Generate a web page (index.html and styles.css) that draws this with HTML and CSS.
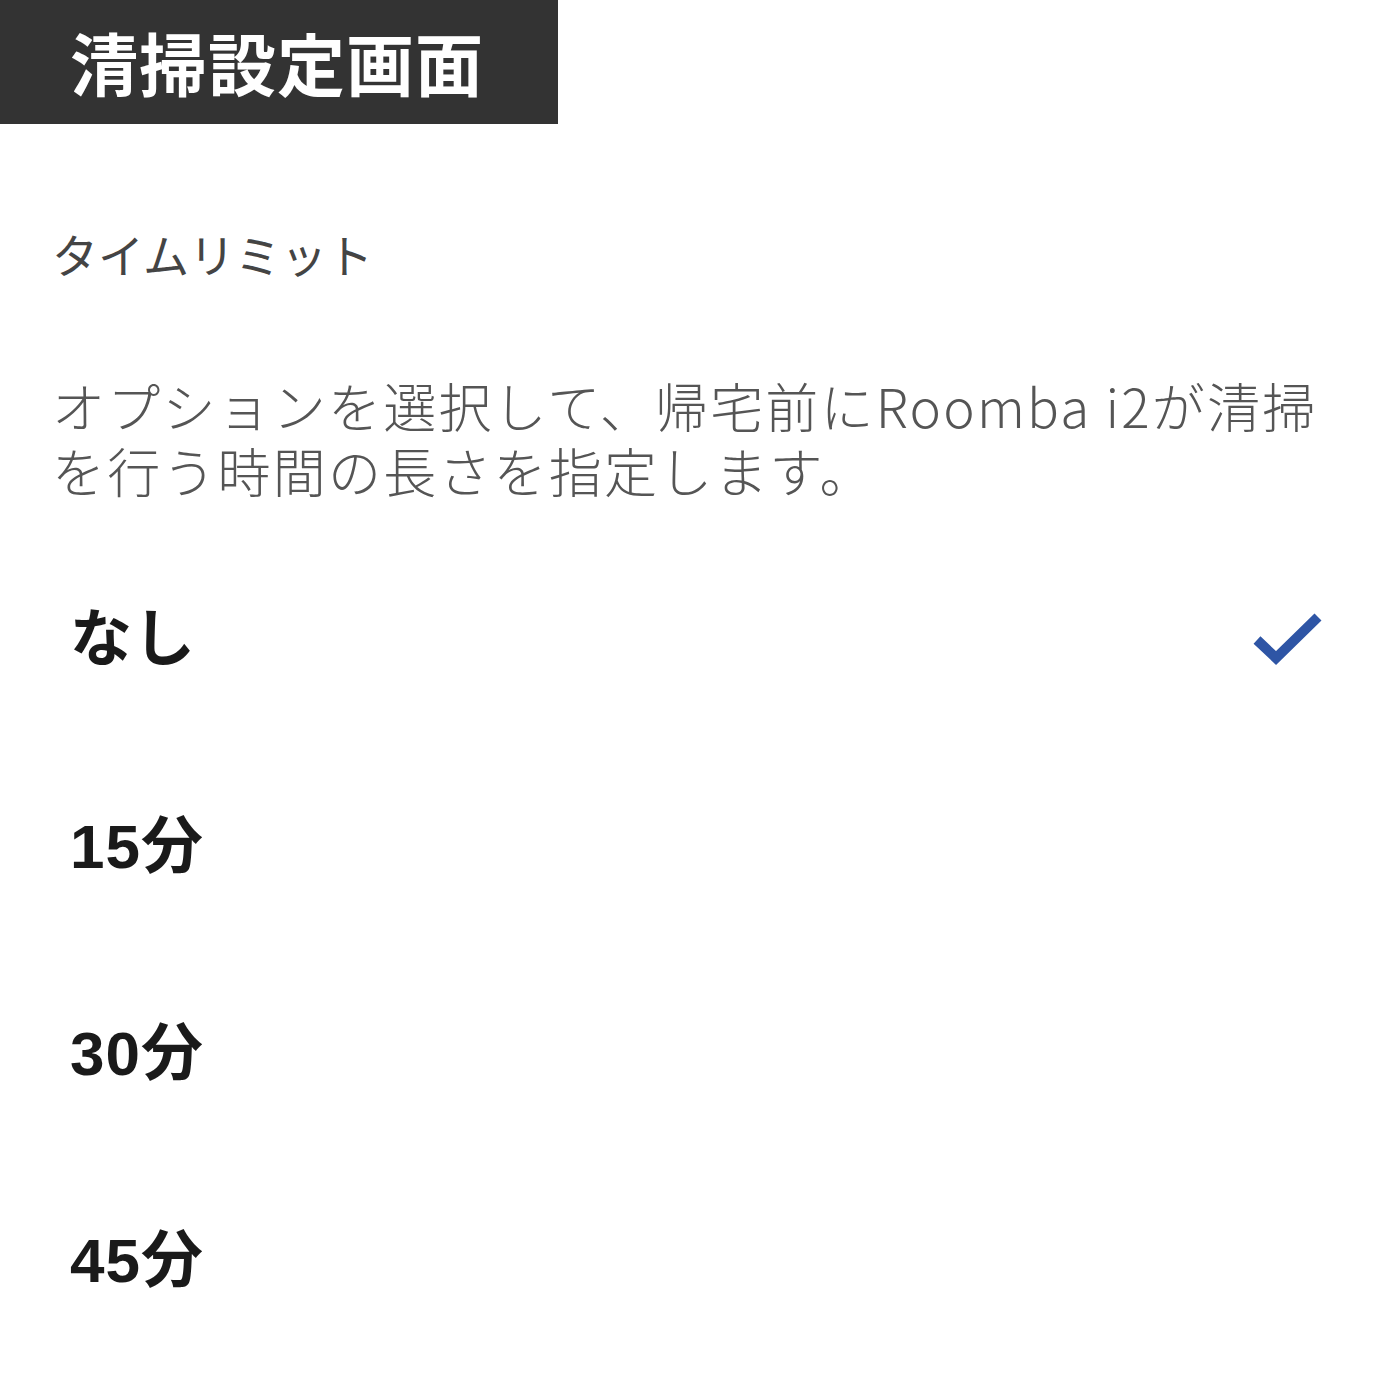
FILE: index.html
```html
<!DOCTYPE html>
<html lang="ja">
<head>
    <meta charset="UTF-8">
    <title>清掃設定画面</title>
    <link rel="stylesheet" href="styles.css">
</head>
<body>
    <div class="header">清掃設定画面</div>

    <div class="content">
        <h2 class="section-title">タイムリミット</h2>
        <p class="description">オプションを選択して、帰宅前にRoomba i2が清掃を行う時間の長さを指定します。</p>

        <!-- 選択肢 -->
        <ul class="options">
            <li class="option selected">
                <span>なし</span>
                <svg class="check" width="70" height="58" viewBox="0 0 70 58">
                    <path d="M5 31 L24 49 L66 8" fill="none" stroke="#2e55a5" stroke-width="10"/>
                </svg>
            </li>
            <li class="option"><span>15分</span></li>
            <li class="option"><span>30分</span></li>
            <li class="option"><span>45分</span></li>
        </ul>
    </div>
</body>
</html>
```

FILE: styles.css
```css
/* 全体 */
body {
    margin: 0;
    background: #fff;
    font-family: "Noto Sans CJK JP", sans-serif;
}

/* タイトル帯 */
.header {
    background: #333;
    color: #fff;
    width: 488px;
    height: 124px;
    padding-left: 70px;
    font-size: 68px;
    font-weight: bold;
    line-height: 124px;
    letter-spacing: 1px;
}

.content {
    padding: 0 78px 0 52px;
}

.section-title {
    margin: 91px 0 0;
    font-size: 46px;
    font-weight: normal;
    color: #444;
    line-height: 76px;
}

.description {
    margin: 82px 0 0;
    font-size: 53px;
    font-weight: 300;
    color: #555;
    line-height: 65px;
    letter-spacing: 2.2px;
}

.options {
    list-style: none;
    margin: 34px 0 0;
    padding: 0 0 0 18px;
}

.option {
    display: flex;
    align-items: center;
    justify-content: space-between;
    height: 207px;
    font-family: "Liberation Sans", "Noto Sans CJK JP", sans-serif;
    font-size: 62px;
    font-weight: bold;
    color: #1a1a1a;
    letter-spacing: 1px;
}

.option span {
    margin-top: -14px;
}

.check {
    margin-top: -6px;
}
```
